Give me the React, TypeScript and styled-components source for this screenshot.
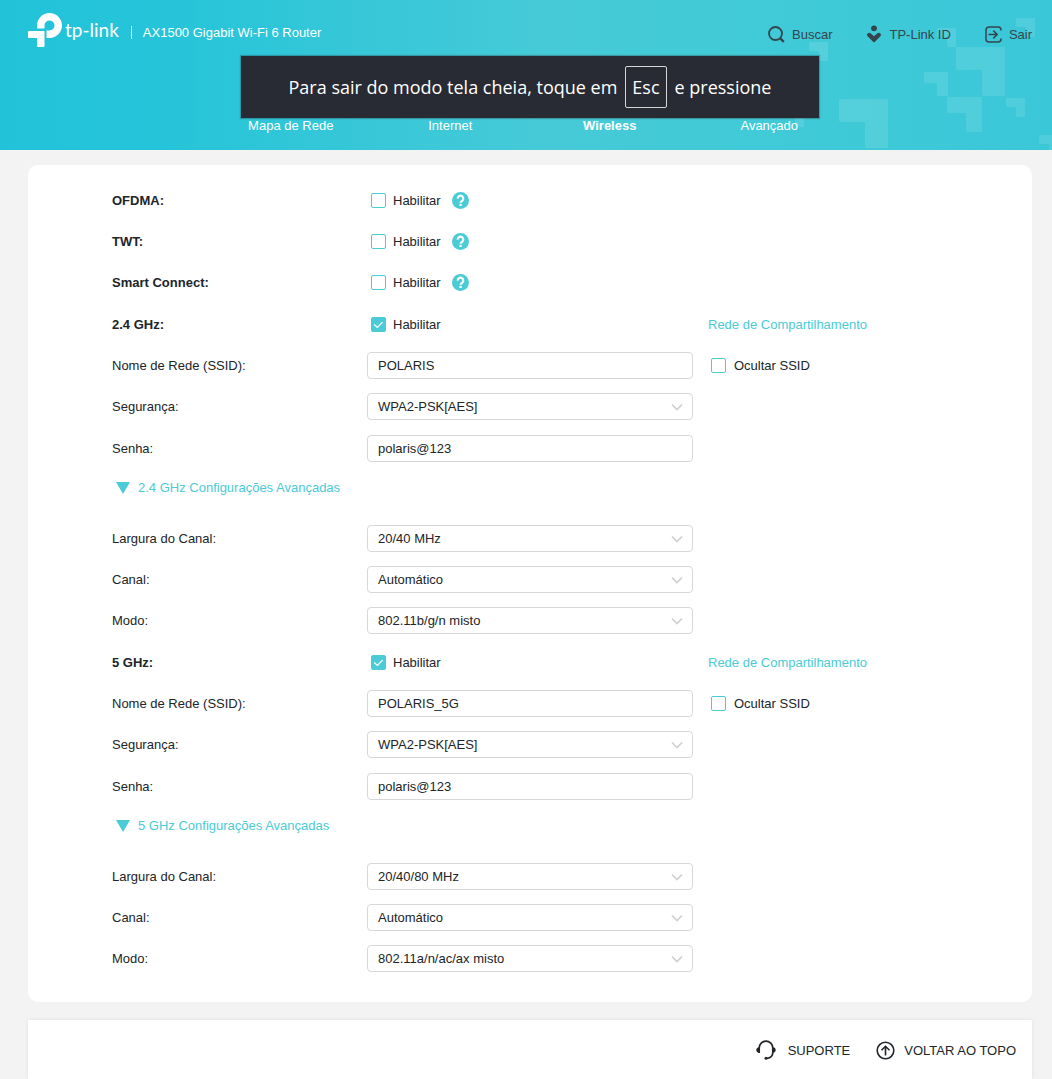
import React, { useId, useState } from "react";
import styled, { createGlobalStyle, css } from "styled-components";

const accent = "#4acbd6";
const ink = "#202529";
const mist = "#f3f3f3";

const GlobalStyle = createGlobalStyle`
  *, *::before, *::after { box-sizing: border-box; }
  body {
    margin: 0;
    background: ${mist};
    color: ${ink};
    font-family: "Liberation Sans", Arial, sans-serif;
    font-size: 13px;
    line-height: 17px;
  }
  button, input, select { font: inherit; color: inherit; }
  a { color: inherit; text-decoration: none; }
`;

const Page = styled.div`
  display: flex;
  flex-direction: column;
  min-height: 100vh;
`;

const Header = styled.header`
  position: relative;
  overflow: hidden;
  padding: 12px 20px 16px 28px;
  background: linear-gradient(to right, #22c3d9 0%, #25c4d9 15%, #46cad7 52%, #40cad7 75%, #3ac7d8 100%);
  color: #fff;
`;

const Pattern = styled.svg`
  position: absolute;
  top: 0;
  right: 0;
  fill: rgba(255, 255, 255, 0.11);
`;

const HeaderContent = styled.div`
  position: relative;
  display: flex;
  flex-direction: column;
  gap: 69px;
`;

const TopBar = styled.div`
  display: flex;
  align-items: center;
  justify-content: space-between;
  height: 36px;
`;

const Brand = styled.div`
  display: flex;
  align-items: center;
`;

const LogoLink = styled.a`
  display: flex;
  align-items: center;
  gap: 2px;
  font-family: Lato, sans-serif;
  font-size: 19px;
  line-height: 20px;
`;

const ProductName = styled.span`
  display: flex;
  align-items: center;
  gap: 11px;
  margin-left: 12px;
  padding-top: 5px;

  &::before {
    content: "";
    width: 1px;
    height: 13px;
    background: #fff;
  }
`;

const Actions = styled.div`
  display: flex;
  gap: 34px;
  padding-top: 8px;
`;

const ActionButton = styled.button`
  display: flex;
  align-items: center;
  gap: 7px;
  padding: 0;
  border: 0;
  background: none;
  color: #34454d;
  cursor: pointer;
`;

const Nav = styled.nav`
  display: grid;
  grid-template-columns: repeat(4, 1fr);
  width: 100%;
  max-width: 638px;
  margin: 0 auto;
  text-align: center;
`;

const NavLink = styled.a<{ $active?: boolean }>`
  font-weight: ${(p) => (p.$active ? 700 : 400)};
`;

const Toast = styled.div`
  position: absolute;
  top: 44px;
  left: 50%;
  display: flex;
  align-items: center;
  justify-content: center;
  gap: 8px;
  width: 578px;
  height: 62px;
  transform: translateX(-50%);
  background: #282b33;
  box-shadow: 0 0 1px 1px rgba(40, 43, 51, 0.3);
  font-family: "Open Sans", sans-serif;
  font-size: 18px;
  line-height: 24px;
  white-space: nowrap;
`;

const Key = styled.kbd`
  padding: 8px 6px;
  border: 1px solid #d6d6d8;
  border-radius: 2px;
  font: inherit;
`;

const Panel = styled.main`
  display: flex;
  flex-direction: column;
  gap: 15px;
  margin: 15px 20px 15px 28px;
  padding: 22px 84px 30px;
  border-radius: 10px;
  background: #fff;
`;

const Group = styled.section`
  display: flex;
  flex-direction: column;
  gap: 14px;
`;

const Row = styled.div`
  display: grid;
  grid-template-columns: 255fr 326fr 255fr;
  align-items: center;
  height: 27px;
`;

const RowLabel = styled.label<{ $strong?: boolean }>`
  font-weight: ${(p) => (p.$strong ? 700 : 400)};
`;

const Inline = styled.div<{ $indent: number }>`
  display: flex;
  align-items: center;
  gap: 11px;
  padding-left: ${(p) => p.$indent}px;
`;

const CheckLabel = styled.label<{ $gap: number }>`
  display: flex;
  align-items: center;
  gap: ${(p) => p.$gap}px;
  cursor: pointer;
`;

const CheckBox = styled.span`
  position: relative;
  display: flex;
`;

const CheckInput = styled.input`
  appearance: none;
  width: 15px;
  height: 15px;
  margin: 0;
  border: 1px solid ${accent};
  border-radius: 2px;
  background: #fff;
  cursor: pointer;

  &:checked { background: ${accent}; }
`;

const CheckMark = styled.svg`
  position: absolute;
  inset: 0;
  pointer-events: none;
`;

const field = css`
  width: 100%;
  height: 27px;
  padding: 0 10px;
  border: 1px solid #d8d8d8;
  border-radius: 4px;
  background: #fff;
  outline-color: ${accent};
`;

const TextInput = styled.input`
  ${field}
`;

const SelectWrap = styled.div`
  display: grid;
  align-items: center;

  > * { grid-area: 1 / 1; }
  > svg {
    justify-self: end;
    margin-right: 10px;
    pointer-events: none;
  }
`;

const SelectInput = styled.select`
  ${field}
  appearance: none;
`;

const HelpButton = styled.button`
  display: flex;
  padding: 0;
  border: 0;
  background: none;
  cursor: pointer;
`;

const AccentLink = styled.a`
  padding-left: 15px;
  color: ${accent};
`;

const Disclosure = styled.button`
  display: flex;
  align-items: center;
  align-self: flex-start;
  gap: 8px;
  height: 23px;
  margin-bottom: 11px;
  padding: 0 0 0 4px;
  border: 0;
  background: none;
  color: ${accent};
  cursor: pointer;
`;

const Footer = styled.footer`
  display: flex;
  flex: 1;
  align-items: flex-start;
  justify-content: flex-end;
  gap: 26px;
  margin: 3px 20px 0 28px;
  padding: 20px 16px 19px;
  background: #fff;
  box-shadow: 0 0 4px rgba(0, 0, 0, 0.08);
`;

const FooterLink = styled.a<{ $gap: number }>`
  display: flex;
  align-items: center;
  gap: ${(p) => p.$gap}px;
  height: 20px;
`;

/* Notched corner shapes: x, y, size and thickness of the bar */
const corners = [
  [839, 99, 49, 23],
  [956, 47, 49, 23],
  [924, 72, 24, 11],
  [947, 97, 35, 16],
  [1006, 98, 19, 9],
  [1016, 18, 19, 9],
  [937, 28, 19, 9],
  [809, 42, 19, 9],
  [1039, 135, 19, 9],
  [785, 108, 19, 9],
];

function cornerPath([x, y, s, t]: number[]) {
  return `M${x} ${y}h${s}v${s}h${-(t - 2)}q-2 0 -2 -2v${-(s - t - 2)}h${-(s - t - 2)}q-2 0 -2 -2z`;
}

function HeaderPattern() {
  return (
    <Pattern width="252" height="150" viewBox="800 0 252 150" overflow="visible" aria-hidden="true">
      {corners.map((c) => (
        <path key={c.slice(0, 2).join()} d={cornerPath(c)} />
      ))}
    </Pattern>
  );
}

function LogoMark() {
  return (
    <svg width="35" height="34" viewBox="0 0 35 34" fill="#fff" aria-hidden="true">
      <path d="M9 15.500V12.500a12.500 12.500 0 1 1 12.500 12.500H18.500V17.500H21.500a5 5 0 1 0 -5 -5V15.500z" />
      <path d="M1 18H16.500V33q0 1 -1 1H10q-1 0 -1 -1V25H1Q0 25 0 24V19Q0 18 1 18z" />
    </svg>
  );
}

function SearchIcon() {
  return (
    <svg width="17" height="17" viewBox="0 0 17 17" fill="none" stroke="currentColor" aria-hidden="true">
      <circle cx="7.500" cy="7.500" r="6.500" strokeWidth="1.800" />
      <path d="M12.300 12.300L15.800 15.800" strokeWidth="2.400" />
    </svg>
  );
}

function UserIcon() {
  return (
    <svg width="16" height="18" viewBox="0 0 16 18" fill="currentColor" aria-hidden="true">
      <circle cx="8" cy="3.300" r="2.900" />
      <path d="M1.600 8.600a2.300 2.300 0 0 1 3.300 0L8 11.300l3.100-2.700a2.300 2.300 0 0 1 3.300 0 1.800 1.800 0 0 1 0 2.600L8.700 17a1 1 0 0 1-1.400 0L1.600 11.200a1.800 1.800 0 0 1 0-2.600z" />
    </svg>
  );
}

function ExitIcon() {
  return (
    <svg width="17" height="17" viewBox="0 0 17 17" fill="none" stroke="currentColor" strokeWidth="1.500" aria-hidden="true">
      <path d="M16 4.500V4a3 3 0 0 0-3-3H4a3 3 0 0 0-3 3v9a3 3 0 0 0 3 3h9a3 3 0 0 0 3-3v-.5" />
      <path d="M3.500 8.500H12M8.300 4.600l3.900 3.900-3.900 3.900" />
    </svg>
  );
}

function HelpIcon() {
  return (
    <svg width="17" height="17" viewBox="0 0 17 17" fill="none" aria-hidden="true">
      <circle cx="8.500" cy="8.500" r="8.500" fill={accent} />
      <path d="M5.700 6.600a2.800 2.800 0 1 1 4.400 2.200c-.9.600-1.500 1-1.500 2" stroke="#fff" strokeWidth="2.100" />
      <rect x="7.500" y="11.800" width="2.200" height="2.200" fill="#fff" />
    </svg>
  );
}

function HeadsetIcon() {
  return (
    <svg width="20" height="20" viewBox="0 0 20 20" fill="none" stroke="currentColor" strokeWidth="1.700" aria-hidden="true">
      <path d="M3.200 13V8a6.800 6.800 0 0 1 13.600 0v4.500c0 3-2 5.300-6 5.800" />
      <path d="M3.300 7.200v5.600C1.300 12.800.3 11.500.3 10s1-2.800 3-2.800zM16.700 7.200v5.600c2 0 3-1.300 3-2.800s-1-2.800-3-2.800z" fill="currentColor" stroke="none" />
      <circle cx="10" cy="18.300" r="1.500" fill="currentColor" stroke="none" />
    </svg>
  );
}

function TopIcon() {
  return (
    <svg width="19" height="19" viewBox="0 0 19 19" fill="none" stroke="currentColor" strokeWidth="1.600" aria-hidden="true">
      <circle cx="9.500" cy="9.500" r="8.300" />
      <path d="M9.500 14.500V5.500M5.500 9.300l4-4 4 4" />
    </svg>
  );
}

function CheckField({ label, checked = false, gap = 7 }: { label: string; checked?: boolean; gap?: number }) {
  const [on, setOn] = useState(checked);
  return (
    <CheckLabel $gap={gap}>
      <CheckBox>
        <CheckInput type="checkbox" checked={on} onChange={() => setOn(!on)} />
        {on && (
          <CheckMark width="15" height="15" viewBox="0 0 15 15" fill="none" stroke="#fff" strokeWidth="1.200">
            <path d="M3.200 7.500l3.200 3 5.200-5.400" />
          </CheckMark>
        )}
      </CheckBox>
      {label}
    </CheckLabel>
  );
}

function ToggleRow({ name, checked, help, share }: { name: string; checked?: boolean; help?: boolean; share?: boolean }) {
  return (
    <Row>
      <RowLabel as="span" $strong>{name}</RowLabel>
      <Inline $indent={4}>
        <CheckField label="Habilitar" checked={checked} />
        {help && (
          <HelpButton type="button" aria-label={name}>
            <HelpIcon />
          </HelpButton>
        )}
      </Inline>
      {share && <AccentLink href="#share">Rede de Compartilhamento</AccentLink>}
    </Row>
  );
}

function TextRow({ name, value, hide }: { name: string; value: string; hide?: boolean }) {
  const id = useId();
  return (
    <Row>
      <RowLabel htmlFor={id}>{name}</RowLabel>
      <TextInput id={id} type="text" defaultValue={value} />
      {hide && (
        <Inline $indent={18}>
          <CheckField label="Ocultar SSID" gap={8} />
        </Inline>
      )}
    </Row>
  );
}

function SelectRow({ name, value }: { name: string; value: string }) {
  const id = useId();
  return (
    <Row>
      <RowLabel htmlFor={id}>{name}</RowLabel>
      <SelectWrap>
        <SelectInput id={id} defaultValue={value}>
          <option>{value}</option>
        </SelectInput>
        <svg width="12" height="8" viewBox="0 0 12 8" fill="none" stroke="#cfcfcf" strokeWidth="1.600" aria-hidden="true">
          <path d="M1 1.500l5 5 5-5" />
        </svg>
      </SelectWrap>
    </Row>
  );
}

type Band = { name: string; ssid: string; width: string; mode: string };

const bands: Band[] = [
  { name: "2.4 GHz", ssid: "POLARIS", width: "20/40 MHz", mode: "802.11b/g/n misto" },
  { name: "5 GHz", ssid: "POLARIS_5G", width: "20/40/80 MHz", mode: "802.11a/n/ac/ax misto" },
];

function BandSettings({ band }: { band: Band }) {
  const [open, setOpen] = useState(true);
  return (
    <>
      <Group>
        <ToggleRow name={`${band.name}:`} checked share />
        <TextRow name="Nome de Rede (SSID):" value={band.ssid} hide />
        <SelectRow name="Segurança:" value="WPA2-PSK[AES]" />
      </Group>
      <Group>
        <TextRow name="Senha:" value="polaris@123" />
        <Disclosure type="button" aria-expanded={open} onClick={() => setOpen(!open)}>
          <svg width="14" height="12" viewBox="0 0 14 12" fill={accent} aria-hidden="true">
            <path d="M0 0h14L7 12z" />
          </svg>
          {`${band.name} Configurações Avançadas`}
        </Disclosure>
      </Group>
      {open && (
        <Group>
          <SelectRow name="Largura do Canal:" value={band.width} />
          <SelectRow name="Canal:" value="Automático" />
          <SelectRow name="Modo:" value={band.mode} />
        </Group>
      )}
    </>
  );
}

export default function App() {
  return (
    <>
      <GlobalStyle />
      <Page>
        <Header>
          <HeaderPattern />
          <HeaderContent>
            <TopBar>
              <Brand>
                <LogoLink href="#home">
                  <LogoMark />
                  tp-link
                </LogoLink>
                <ProductName>AX1500 Gigabit Wi-Fi 6 Router</ProductName>
              </Brand>
              <Actions>
                <ActionButton type="button"><SearchIcon />Buscar</ActionButton>
                <ActionButton type="button"><UserIcon />TP-Link ID</ActionButton>
                <ActionButton type="button"><ExitIcon />Sair</ActionButton>
              </Actions>
            </TopBar>
            <Nav>
              <NavLink href="#map">Mapa de Rede</NavLink>
              <NavLink href="#internet">Internet</NavLink>
              <NavLink href="#wireless" $active>Wireless</NavLink>
              <NavLink href="#advanced">Avançado</NavLink>
            </Nav>
            <Toast role="status">
              <span>Para sair do modo tela cheia, toque em</span>
              <Key>Esc</Key>
              <span>e pressione</span>
            </Toast>
          </HeaderContent>
        </Header>
        <Panel>
          <Group>
            <ToggleRow name="OFDMA:" help />
            <ToggleRow name="TWT:" help />
            <ToggleRow name="Smart Connect:" help />
          </Group>
          {bands.map((band) => (
            <BandSettings key={band.name} band={band} />
          ))}
        </Panel>
        <Footer>
          <FooterLink href="#support" $gap={12}><HeadsetIcon />SUPORTE</FooterLink>
          <FooterLink href="#top" $gap={9}><TopIcon />VOLTAR AO TOPO</FooterLink>
        </Footer>
      </Page>
    </>
  );
}
